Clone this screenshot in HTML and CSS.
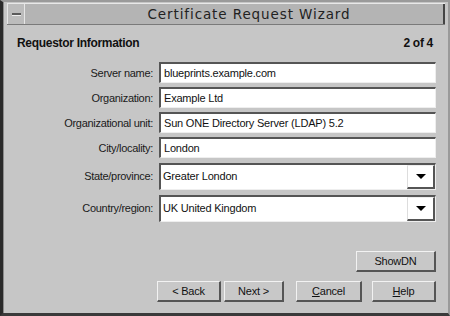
FILE: index.html
```html
<!DOCTYPE html>
<html>
<head>
<meta charset="utf-8">
<link rel="stylesheet" href="styles.css">
</head>
<body>
<div class="window">
  <div class="titlebar">
    <div class="minbtn"><span class="dash"></span></div>
    <div class="title">Certificate Request Wizard</div>
  </div>
  <div class="content">
    <div class="header">
      <span>Requestor Information</span>
      <span>2 of 4</span>
    </div>
    <div class="form">
      <label class="lbl">Server name:</label>
      <div class="field">blueprints.example.com</div>
      <label class="lbl">Organization:</label>
      <div class="field">Example Ltd</div>
      <label class="lbl">Organizational unit:</label>
      <div class="field">Sun ONE Directory Server (LDAP) 5.2</div>
      <label class="lbl">City/locality:</label>
      <div class="field">London</div>
      <label class="lbl">State/province:</label>
      <div class="combo"><div class="ctext">Greater London</div><div class="arrow"><span class="tri"></span></div></div>
      <label class="lbl">Country/region:</label>
      <div class="combo"><div class="ctext">UK United Kingdom</div><div class="arrow"><span class="tri"></span></div></div>
    </div>
    <div class="spacer"></div>
    <div class="showrow"><button class="btn wide">ShowDN</button></div>
    <div class="navrow">
      <button class="btn back">&lt; Back</button>
      <button class="btn next">Next &gt;</button>
      <button class="btn cancel"><u>C</u>ancel</button>
      <button class="btn help"><u>H</u>elp</button>
    </div>
  </div>
</div>
</body>
</html>
```
FILE: styles.css
```css
html, body {
  margin: 0;
  padding: 0;
  background: #c4c4c4;
}
body {
  width: 450px;
  height: 316px;
  overflow: hidden;
  font-family: "Liberation Sans", Arial, sans-serif;
}
.window {
  box-sizing: border-box;
  width: 450px;
  height: 316px;
  border-left: 3px solid #2a2a2a;
  border-top: 2px solid #9a9a9a;
  border-right: 2px solid #9a9a9a;
  border-bottom: 3px solid #3a3a3a;
  padding: 1px 3px 3px 4px;
  display: flex;
  flex-direction: column;
  background: #c6c6c6;
  box-shadow: inset 1px 0 0 #8a8a8a;
}
.titlebar {
  height: 20px;
  display: flex;
  background: #b4b4b4;
  border-top: 1px solid #e8e8e8;
  border-bottom: 1px solid #7a7a7a;
}
.minbtn {
  width: 16px;
  border-right: 1px solid #e6e6e6;
  border-left: 1px solid #e6e6e6;
  display: flex;
  align-items: center;
  justify-content: center;
  background: #bcbcbc;
}
.dash {
  width: 9px;
  height: 2px;
  background: #5a5a5a;
  border-bottom: 1px solid #eee;
}
.title {
  flex: 1;
  text-align: center;
  font-family: "DejaVu Sans", sans-serif;
  font-size: 13.5px;
  line-height: 20px;
  letter-spacing: 0.9px;
  color: #222;
  padding-left: 30px;
  border-right: 2px solid #444;
}
.content {
  flex: 1;
  display: flex;
  flex-direction: column;
  padding: 11px 9px 8px 10px;
}
.header {
  display: flex;
  justify-content: space-between;
  font-weight: bold;
  font-size: 12px;
  letter-spacing: -0.3px;
  color: #111;
  padding-right: 3px;
  margin-bottom: 12px;
}
.form {
  display: grid;
  grid-template-columns: 136px 1fr;
  column-gap: 6px;
  row-gap: 4px;
  align-items: center;
}
.lbl {
  text-align: right;
  font-size: 11px;
  color: #1a1a1a;
  letter-spacing: -0.3px;
}
.field {
  height: 21px;
  box-sizing: border-box;
  background: #fff;
  border-top: 2px solid #555;
  border-left: 2px solid #555;
  border-right: 1px solid #eee;
  border-bottom: 1px solid #eee;
  font-size: 11px;
  line-height: 18px;
  padding-left: 3px;
  color: #111;
  letter-spacing: -0.2px;
}
.combo {
  height: 27px;
  box-sizing: border-box;
  background: #fff;
  border-top: 2px solid #555;
  border-left: 2px solid #555;
  border-right: 1px solid #eee;
  border-bottom: 1px solid #eee;
  display: flex;
  margin-top: 1px;
}
.ctext {
  flex: 1;
  font-size: 11px;
  line-height: 23px;
  padding-left: 2px;
  letter-spacing: -0.2px;
  color: #111;
}
.arrow {
  width: 28px;
  box-sizing: border-box;
  background: #fff;
  border-left: 1px solid #ddd;
  border-top: 1px solid #eee;
  border-right: 2px solid #555;
  border-bottom: 2px solid #555;
  display: flex;
  align-items: center;
  justify-content: center;
}
.tri {
  width: 0;
  height: 0;
  border-left: 5px solid transparent;
  border-right: 5px solid transparent;
  border-top: 5px solid #000;
}
.spacer { flex: 1; }
.showrow {
  display: flex;
  justify-content: flex-end;
  margin-bottom: 9px;
}
.navrow {
  display: flex;
  justify-content: flex-end;
  gap: 4px;
}
.btn {
  height: 21px;
  box-sizing: border-box;
  background: #c8c8c8;
  border-top: 1px solid #f2f2f2;
  border-left: 1px solid #f2f2f2;
  border-right: 2px solid #555;
  border-bottom: 2px solid #555;
  font-family: "Liberation Sans", Arial, sans-serif;
  font-size: 11px;
  color: #111;
  width: 64px;
  padding: 0;
  letter-spacing: -0.2px;
}
.btn.wide { width: 80px; }
.btn.back { width: 64px; margin-right: -1px; }
.btn.next { width: 60px; margin-right: 8px; }
.btn.cancel { width: 66px; margin-right: 6px; }
.btn.help { width: 64px; }
u { text-decoration: underline; }
```
